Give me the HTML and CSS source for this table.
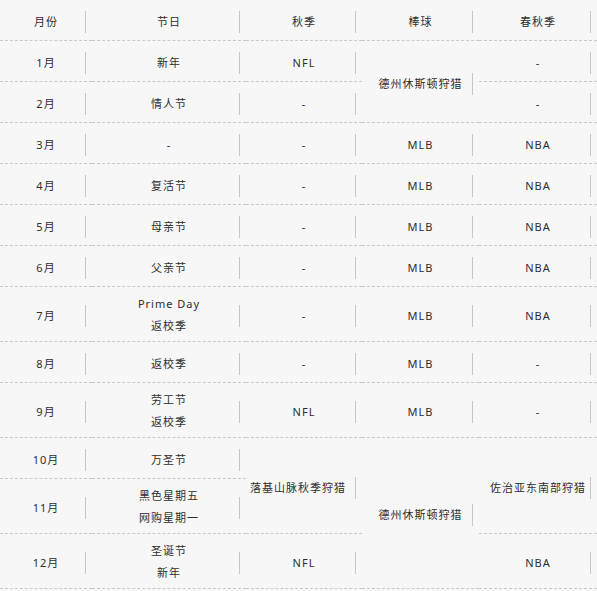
FILE: index.html
```html
<!DOCTYPE html>
<html lang="zh-CN">
<head>
<meta charset="utf-8">
<title>月份节日表</title>
<link rel="stylesheet" href="styles.css">
</head>
<body>
<table class="sched">
  <colgroup>
    <col class="c1"><col class="c2"><col class="c3"><col class="c4"><col class="c5">
  </colgroup>
  <thead>
    <tr><th>月份</th><th>节日</th><th>秋季</th><th>棒球</th><th>春秋季</th></tr>
  </thead>
  <tbody>
    <tr><td>1月</td><td>新年</td><td>NFL</td><td rowspan="2">德州休斯顿狩猎</td><td>-</td></tr>
    <tr><td>2月</td><td>情人节</td><td>-</td><td>-</td></tr>
    <tr><td>3月</td><td>-</td><td>-</td><td>MLB</td><td>NBA</td></tr>
    <tr><td>4月</td><td>复活节</td><td>-</td><td>MLB</td><td>NBA</td></tr>
    <tr><td>5月</td><td>母亲节</td><td>-</td><td>MLB</td><td>NBA</td></tr>
    <tr><td>6月</td><td>父亲节</td><td>-</td><td>MLB</td><td>NBA</td></tr>
    <tr><td>7月</td><td class="two">Prime Day<br>返校季</td><td>-</td><td>MLB</td><td>NBA</td></tr>
    <tr><td>8月</td><td>返校季</td><td>-</td><td>MLB</td><td>-</td></tr>
    <tr><td>9月</td><td class="two">劳工节<br>返校季</td><td>NFL</td><td>MLB</td><td>-</td></tr>
    <tr><td>10月</td><td>万圣节</td><td rowspan="2" class="shift">落基山脉秋季狩猎</td><td rowspan="3">德州休斯顿狩猎</td><td rowspan="2">佐治亚东南部狩猎</td></tr>
    <tr><td>11月</td><td class="two">黑色星期五<br>网购星期一</td></tr>
    <tr><td>12月</td><td class="two">圣诞节<br>新年</td><td>NFL</td><td>NBA</td></tr>
  </tbody>
</table>
</body>
</html>
```
FILE: styles.css
```css
html, body {
  margin: 0;
  padding: 0;
  background: #f7f7f7;
}
.sched {
  width: 597px;
  border-collapse: collapse;
  table-layout: fixed;
  font-family: "Noto Sans", "Noto Sans CJK SC", sans-serif;
  font-size: 11px;
  letter-spacing: 1px;
  color: #2e2e2e;
}
.c1 { width: 92px; }
.c2 { width: 154px; }
.c3 { width: 116px; }
.c4 { width: 117px; }
.c5 { width: 118px; }
.sched th,
.sched td {
  padding: 11px 0 7px;
  line-height: 22px;
  text-align: center;
  font-weight: normal;
  border-bottom: 1px dashed #c9c9c9;
  background-image: linear-gradient(#c6c6c6, #c6c6c6);
  background-repeat: no-repeat;
  background-size: 1px 22px;
  background-position: right 6px top calc(50% + 2px);
}
.sched td.two {
  padding: 6px 0 4px;
}
.sched td.shift {
  padding-right: 12px;
}
```
